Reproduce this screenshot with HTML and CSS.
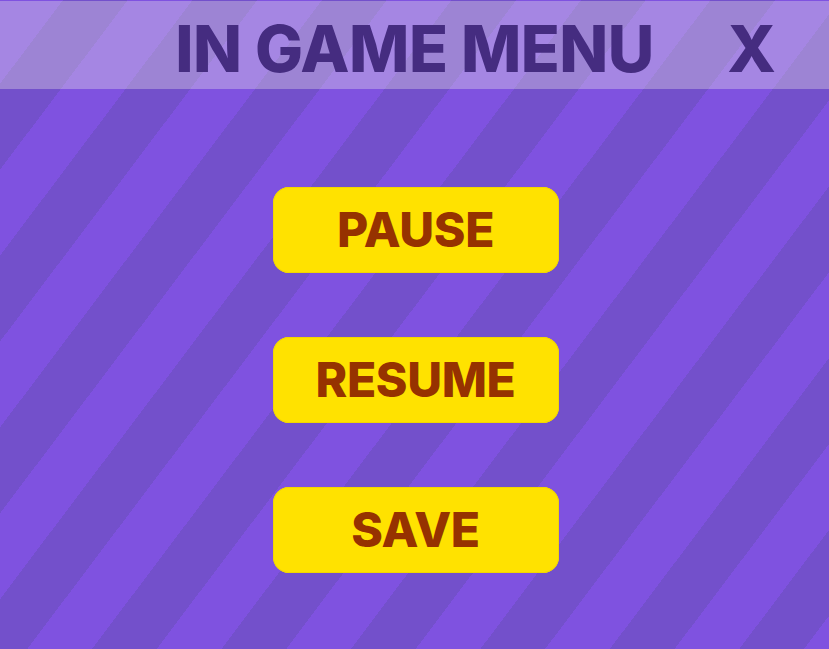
FILE: index.html
```html
<!DOCTYPE html>
<html lang="en">
<head>
<meta charset="utf-8">
<title>In Game Menu</title>
<link rel="stylesheet" href="styles.css">
</head>
<body>
  <div class="screen">
    <header class="topbar">
      <span class="spacer"></span>
      <h1 class="title">IN GAME MENU</h1>
      <button class="close" type="button" aria-label="Close">X</button>
    </header>
    <main class="menu">
      <button class="menu-btn" type="button">PAUSE</button>
      <button class="menu-btn" type="button">RESUME</button>
      <button class="menu-btn" type="button">SAVE</button>
    </main>
  </div>
</body>
</html>
```

FILE: styles.css
```css
html, body {
  margin: 0;
  padding: 0;
  height: 100%;
}

body {
  font-family: Inter, "Noto Sans", "Liberation Sans", sans-serif;
  background: repeating-linear-gradient(127deg,
    #7f52e0 0 50.4px,
    #7350cb 50.4px 102.1px,
    #7f52e0 102.1px 103.4px);
  overflow: hidden;
}

.screen {
  min-height: 100vh;
  display: flex;
  flex-direction: column;
  padding-top: 1px;
  box-sizing: border-box;
}

.topbar {
  height: 88px;
  box-sizing: border-box;
  padding-top: 8px;
  display: grid;
  grid-template-columns: 1fr auto 1fr;
  align-items: center;
  background: rgba(255, 255, 235, 0.3);
}

.title {
  margin: 0;
  font-size: 64px;
  font-weight: 800;
  line-height: 1;
  color: #452c80;
  letter-spacing: -0.008em;
  white-space: nowrap;
}

.close {
  justify-self: end;
  margin-right: 53px;
  padding: 0;
  border: 0;
  background: none;
  font-family: inherit;
  font-size: 64px;
  font-weight: 800;
  line-height: 1;
  color: #452c80;
  cursor: pointer;
}

.menu {
  display: flex;
  flex-direction: column;
  align-items: center;
  gap: 64px;
  padding-top: 98px;
  padding-left: 2px;
}

.menu-btn {
  width: 286px;
  height: 86px;
  border: 0;
  border-radius: 16px;
  background: #ffe200;
  box-shadow: inset 0 0 0 1px #f2d600;
  color: #963200;
  font-family: inherit;
  font-size: 48px;
  font-weight: 800;
  letter-spacing: -0.008em;
  line-height: 1;
  padding: 0;
  cursor: pointer;
}
```
